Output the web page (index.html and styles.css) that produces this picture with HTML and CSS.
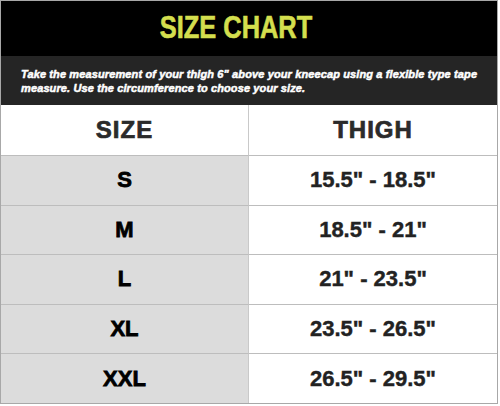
FILE: index.html
```html
<!DOCTYPE html>
<html>
<head>
<meta charset="utf-8">
<link rel="stylesheet" href="styles.css">
</head>
<body>
<div class="chart">
  <div class="title"><span class="title-text">SIZE CHART</span></div>
  <div class="note">
    <p>Take the measurement of your thigh 6" above your kneecap using a flexible type tape</p>
    <p>measure. Use the circumference to choose your size.</p>
  </div>
  <div class="table">
    <div class="cell head left">SIZE</div>
    <div class="cell head right">THIGH</div>
    <div class="cell size">S</div>
    <div class="cell val">15.5" - 18.5"</div>
    <div class="cell size">M</div>
    <div class="cell val">18.5" - 21"</div>
    <div class="cell size">L</div>
    <div class="cell val">21" - 23.5"</div>
    <div class="cell size">XL</div>
    <div class="cell val">23.5" - 26.5"</div>
    <div class="cell size">XXL</div>
    <div class="cell val">26.5" - 29.5"</div>
  </div>
</div>
</body>
</html>
```

FILE: styles.css
```css
* { box-sizing: border-box; }
html, body { margin: 0; padding: 0; background: #fff; }
body { font-family: "Liberation Sans", Arial, sans-serif; }

.chart {
  width: 498px;
  height: 404px;
  border: 1px solid #a8a8a8;
  display: flex;
  flex-direction: column;
}

.title {
  height: 55px;
  background: #000;
  display: flex;
  align-items: center;
  justify-content: center;
  padding-bottom: 3px;
  padding-right: 26px;
}
.title-text {
  display: inline-block;
  color: #d4df4e;
  font-family: "Liberation Sans", Arial, sans-serif;
  font-weight: 700;
  font-size: 31px;
  line-height: 1;
  transform: scale(0.82, 1.04);
  -webkit-text-stroke: 0.6px #d4df4e;
}

.note {
  height: 49px;
  background: #252525;
  color: #fff;
  font-weight: 700;
  font-style: italic;
  font-size: 11px;
  line-height: 14px;
  letter-spacing: 0.12px;
  padding-left: 20px;
  display: flex;
  flex-direction: column;
  justify-content: center;
  -webkit-text-stroke: 0.5px #fff;
}
.note p { margin: 0; }

.table {
  flex: 1;
  display: grid;
  grid-template-columns: 248px 1fr;
  grid-template-rows: 50px repeat(5, 1fr);
}

.cell {
  display: flex;
  align-items: center;
  justify-content: center;
  font-weight: 700;
}
.cell:nth-child(odd) { border-right: 1px solid #c9c9c9; }
.cell:nth-child(n+3) { border-top: 1px solid #bdbdbd; }

.head {
  background: #fff;
  color: #2b2b2b;
  font-size: 24px;
  letter-spacing: 1px;
  -webkit-text-stroke: 0.7px #2b2b2b;
}
.size {
  background: #dcdcdc;
  color: #000;
  font-size: 22px;
  -webkit-text-stroke: 0.8px #000;
}
.val {
  background: #fff;
  color: #222;
  font-size: 22px;
  -webkit-text-stroke: 0.4px #222;
}
```
